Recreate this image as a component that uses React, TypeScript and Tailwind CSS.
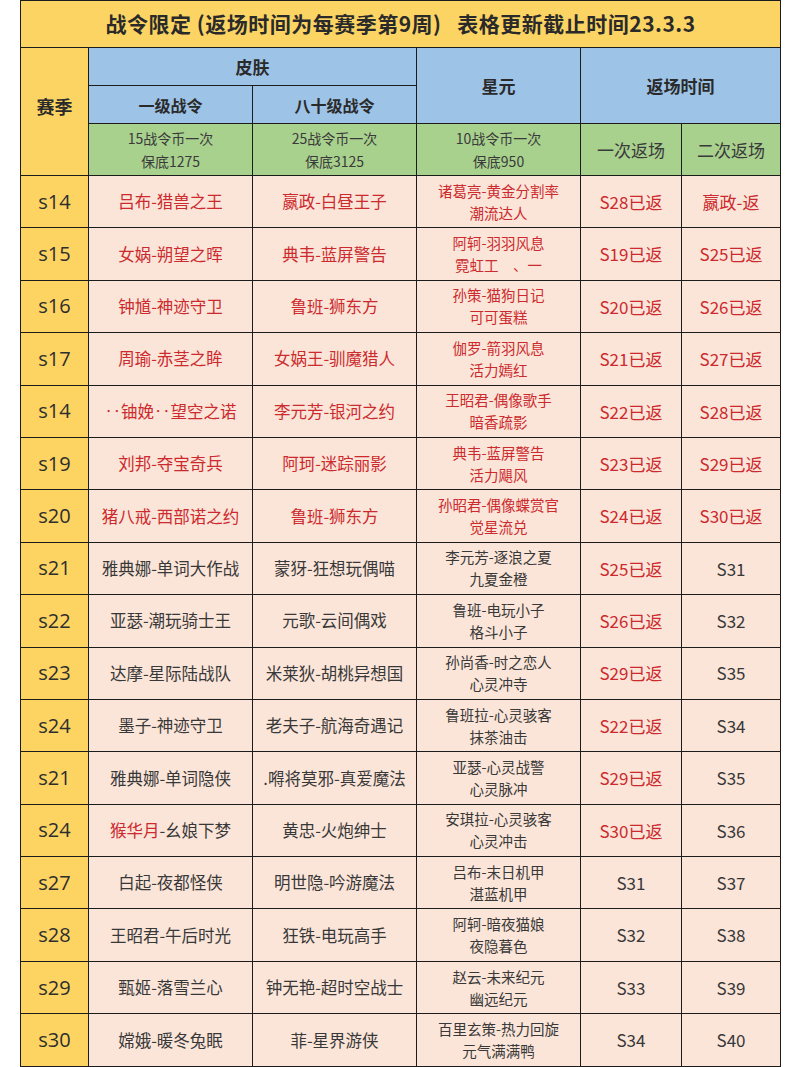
import React from "react";

type Row = {
  s: string;
  a: React.ReactNode;
  b: string;
  c1: string;
  c2: string;
  d: string;
  e: string;
  red: boolean;
  dRed: boolean;
};

const R = "#cc2a2e";
const D = "#383838";

const rows: Row[] = [
  { s: "s14", a: "吕布-猎兽之王", b: "嬴政-白昼王子", c1: "诸葛亮-黄金分割率", c2: "潮流达人", d: "S28已返", e: "嬴政-返", red: true, dRed: true },
  { s: "s15", a: "女娲-朔望之晖", b: "典韦-蓝屏警告", c1: "阿轲-羽羽风息", c2: "霓虹工　、一", d: "S19已返", e: "S25已返", red: true, dRed: true },
  { s: "s16", a: "钟馗-神迹守卫", b: "鲁班-狮东方", c1: "孙策-猫狗日记", c2: "可可蛋糕", d: "S20已返", e: "S26已返", red: true, dRed: true },
  { s: "s17", a: "周瑜-赤茎之眸", b: "女娲王-驯魔猎人", c1: "伽罗-箭羽风息", c2: "活力嫣红", d: "S21已返", e: "S27已返", red: true, dRed: true },
  { s: "s14", a: "‥铀娩‥望空之诺", b: "李元芳-银河之约", c1: "王昭君-偶像歌手", c2: "暗香疏影", d: "S22已返", e: "S28已返", red: true, dRed: true },
  { s: "s19", a: "刘邦-夺宝奇兵", b: "阿珂-迷踪丽影", c1: "典韦-蓝屏警告", c2: "活力飓风", d: "S23已返", e: "S29已返", red: true, dRed: true },
  { s: "s20", a: "猪八戒-西部诺之约", b: "鲁班-狮东方", c1: "孙昭君-偶像蝶赏官", c2: "觉星流兑", d: "S24已返", e: "S30已返", red: true, dRed: true },
  { s: "s21", a: "雅典娜-单词大作战", b: "蒙犽-狂想玩偶喵", c1: "李元芳-逐浪之夏", c2: "九夏金橙", d: "S25已返", e: "S31", red: false, dRed: true },
  { s: "s22", a: "亚瑟-潮玩骑士王", b: "元歌-云间偶戏", c1: "鲁班-电玩小子", c2: "格斗小子", d: "S26已返", e: "S32", red: false, dRed: true },
  { s: "s23", a: "达摩-星际陆战队", b: "米莱狄-胡桃异想国", c1: "孙尚香-时之恋人", c2: "心灵冲寺", d: "S29已返", e: "S35", red: false, dRed: true },
  { s: "s24", a: "墨子-神迹守卫", b: "老夫子-航海奇遇记", c1: "鲁班拉-心灵骇客", c2: "抹茶油击", d: "S22已返", e: "S34", red: false, dRed: true },
  { s: "s21", a: "雅典娜-单词隐侠", b: ".嘚将莫邪-真爱魔法", c1: "亚瑟-心灵战警", c2: "心灵脉冲", d: "S29已返", e: "S35", red: false, dRed: true },
  {
    s: "s24",
    a: (
      <>
        <span style={{ color: R }}>猴华月</span>-幺娘下梦
      </>
    ),
    b: "黄忠-火炮绅士",
    c1: "安琪拉-心灵骇客",
    c2: "心灵冲击",
    d: "S30已返",
    e: "S36",
    red: false,
    dRed: true,
  },
  { s: "s27", a: "白起-夜都怪侠", b: "明世隐-吟游魔法", c1: "吕布-末日机甲", c2: "湛蓝机甲", d: "S31", e: "S37", red: false, dRed: false },
  { s: "s28", a: "王昭君-午后时光", b: "狂铁-电玩高手", c1: "阿轲-暗夜猫娘", c2: "夜隐暮色", d: "S32", e: "S38", red: false, dRed: false },
  { s: "s29", a: "甄姬-落雪兰心", b: "钟无艳-超时空战士", c1: "赵云-未来纪元", c2: "幽远纪元", d: "S33", e: "S39", red: false, dRed: false },
  { s: "s30", a: "嫦娥-暖冬兔眠", b: "菲-星界游侠", c1: "百里玄策-热力回旋", c2: "元气满满鸭", d: "S34", e: "S40", red: false, dRed: false },
];

const font = { fontFamily: '"Noto Sans CJK SC", "Noto Sans", sans-serif' };

export default function App() {
  const bd = "border-[1.5px] border-[#1c1c1c]";
  return (
    <div className="w-[800px] h-[1067px] bg-white overflow-hidden" style={font}>
      <div className="pl-[20px]">
        <table className="border-collapse table-fixed w-[760px]">
          <colgroup>
            <col className="w-[68px]" />
            <col className="w-[164px]" />
            <col className="w-[164px]" />
            <col className="w-[164px]" />
            <col className="w-[101px]" />
            <col className="w-[99px]" />
          </colgroup>
          <tbody>
            <tr className="h-[47px]">
              <td colSpan={6} className={`${bd} bg-[#fbd463] text-center text-[21px] font-bold text-[#2a2a2a] tracking-[0.5px]`}>
                战令限定 (返场时间为每赛季第9周)&nbsp;&nbsp;&nbsp;表格更新截止时间23.3.3
              </td>
            </tr>
            <tr className="h-[38px]">
              <td rowSpan={3} className={`${bd} bg-[#fbd463] text-center text-[18px] font-bold text-[#2a2a2a] pb-[10px]`}>
                赛季
              </td>
              <td colSpan={2} className={`${bd} bg-[#9dc3e6] text-center text-[17px] font-bold text-[#2a2a2a]`}>
                皮肤
              </td>
              <td rowSpan={2} className={`${bd} bg-[#9dc3e6] text-center text-[17px] font-bold text-[#2a2a2a]`}>
                星元
              </td>
              <td rowSpan={2} colSpan={2} className={`${bd} bg-[#9dc3e6] text-center text-[17px] font-bold text-[#2a2a2a]`}>
                返场时间
              </td>
            </tr>
            <tr className="h-[38px]">
              <td className={`${bd} bg-[#9dc3e6] text-center text-[16px] font-bold text-[#2a2a2a]`}>一级战令</td>
              <td className={`${bd} bg-[#9dc3e6] text-center text-[16px] font-bold text-[#2a2a2a]`}>八十级战令</td>
            </tr>
            <tr className="h-[52px]">
              {["15战令币一次|保底1275", "25战令币一次|保底3125", "10战令币一次|保底950"].map((t) => (
                <td key={t} className={`${bd} bg-[#a9d18e] text-center text-[14px] leading-[23px] text-[#3a3a3a]`}>
                  <div>{t.split("|")[0]}</div>
                  <div>{t.split("|")[1]}</div>
                </td>
              ))}
              <td className={`${bd} bg-[#a9d18e] text-center text-[17px] text-[#3a3a3a]`}>一次返场</td>
              <td className={`${bd} bg-[#a9d18e] text-center text-[17px] text-[#3a3a3a]`}>二次返场</td>
            </tr>
            {rows.map((r, i) => {
              const c = r.red ? R : D;
              return (
                <tr key={i} className="h-[52.4px]">
                  <td className={`${bd} bg-[#fdd462] text-center text-[20px] text-[#2e2e2e]`} style={{ fontFamily: '"Open Sans", "Noto Sans", sans-serif' }}>
                    {r.s}
                  </td>
                  <td className={`${bd} bg-[#fbe5d8] text-center text-[16.5px] whitespace-nowrap`} style={{ color: c }}>
                    {r.a}
                  </td>
                  <td className={`${bd} bg-[#fbe5d8] text-center text-[16.5px] whitespace-nowrap`} style={{ color: c }}>
                    {r.b}
                  </td>
                  <td className={`${bd} bg-[#fbe5d8] text-center text-[14.5px] leading-[22px] whitespace-nowrap`} style={{ color: c }}>
                    <div>{r.c1}</div>
                    <div>{r.c2}</div>
                  </td>
                  <td className={`${bd} bg-[#fbe5d8] text-center text-[17px] whitespace-nowrap`} style={{ color: r.dRed ? R : D }}>
                    {r.d}
                  </td>
                  <td className={`${bd} bg-[#fbe5d8] text-center text-[17px] whitespace-nowrap`} style={{ color: c }}>
                    {r.e}
                  </td>
                </tr>
              );
            })}
          </tbody>
        </table>
      </div>
    </div>
  );
}
